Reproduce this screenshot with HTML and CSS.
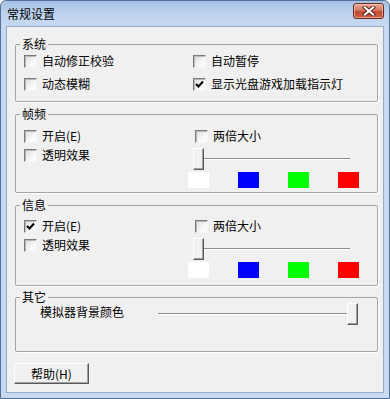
FILE: index.html
```html
<!DOCTYPE html>
<html lang="zh-CN">
<head>
  <meta charset="UTF-8">
  <meta name="viewport" content="width=device-width, initial-scale=1.0">
  <title>常规设置</title>
  <link rel="stylesheet" href="styles.css">
</head>
<body>
  <div class="window">
    <div class="titlebar">
      <span class="title">常规设置</span>
      <!-- close button -->
      <button class="close" type="button">
        <svg width="14" height="10" viewBox="0 0 14 10">
          <path d="M3 1.5 L11 8.5 M11 1.5 L3 8.5" stroke="#5b1e12" stroke-width="4" stroke-linecap="square"/>
          <path d="M3 1.5 L11 8.5 M11 1.5 L3 8.5" stroke="#fff" stroke-width="2.2" stroke-linecap="square"/>
        </svg>
      </button>
    </div>

    <div class="client">
      <!-- 系统 -->
      <fieldset class="group group-system">
        <legend>系统</legend>
        <div class="rows">
          <label class="check"><span class="box"></span>自动修正校验</label>
          <label class="check"><span class="box"></span>自动暂停</label>
          <label class="check"><span class="box"></span>动态模糊</label>
          <label class="check"><span class="box checked"><svg width="9" height="9" viewBox="0 0 9 9"><path d="M1 4 L3.5 6.5 L8 1.5" fill="none" stroke="#000" stroke-width="2"/></svg></span>显示光盘游戏加载指示灯</label>
        </div>
      </fieldset>

      <!-- 帧频 -->
      <fieldset class="group group-frame">
        <legend>帧频</legend>
        <div class="panel">
          <label class="check"><span class="box"></span>开启(E)</label>
          <label class="check"><span class="box"></span>两倍大小</label>
          <label class="check check-low"><span class="box"></span>透明效果</label>
          <div class="slider slider-short">
            <div class="track"></div>
            <div class="thumb" style="--pos: 0"></div>
          </div>
          <div></div>
          <div class="swatches">
            <span class="swatch white"></span>
            <span class="swatch blue"></span>
            <span class="swatch green"></span>
            <span class="swatch red"></span>
          </div>
        </div>
      </fieldset>

      <!-- 信息 -->
      <fieldset class="group group-info">
        <legend>信息</legend>
        <div class="panel">
          <label class="check"><span class="box checked"><svg width="9" height="9" viewBox="0 0 9 9"><path d="M1 4 L3.5 6.5 L8 1.5" fill="none" stroke="#000" stroke-width="2"/></svg></span>开启(E)</label>
          <label class="check"><span class="box"></span>两倍大小</label>
          <label class="check check-low"><span class="box"></span>透明效果</label>
          <div class="slider slider-short">
            <div class="track"></div>
            <div class="thumb" style="--pos: 0"></div>
          </div>
          <div></div>
          <div class="swatches">
            <span class="swatch white"></span>
            <span class="swatch blue"></span>
            <span class="swatch green"></span>
            <span class="swatch red"></span>
          </div>
        </div>
      </fieldset>

      <!-- 其它 -->
      <fieldset class="group group-other">
        <legend>其它</legend>
        <div class="other-row">
          <span class="other-label">模拟器背景颜色</span>
          <div class="slider slider-long">
            <div class="track"></div>
            <div class="thumb" style="--pos: 1"></div>
          </div>
        </div>
      </fieldset>

      <button class="btn" type="button">帮助(H)</button>
    </div>
  </div>
</body>
</html>
```

FILE: styles.css
```css
* {
  box-sizing: border-box;
}

body {
  margin: 0;
  font-family: "Noto Sans CJK SC", "Noto Sans", sans-serif;
  font-size: 12px;
  color: #000;
}

.window {
  width: 390px;
  height: 399px;
  border: 1px solid #51719b;
  border-radius: 6px 6px 0 0;
  background: linear-gradient(to bottom, #a7c1e4 0, #bcd2ee 12px, #c8daf1 26px, #c8daf1 100%);
  padding: 0 5px 5px;
  display: flex;
  flex-direction: column;
}

.titlebar {
  height: 25px;
  display: flex;
  align-items: flex-start;
  padding-left: 1px;
}

.title {
  margin-top: 6px;
  line-height: 14px;
}

.close {
  margin-left: auto;
  margin-top: 2px;
  width: 31px;
  height: 16px;
  padding: 0;
  border: 1px solid #6b2b1f;
  border-radius: 3px;
  background: linear-gradient(to bottom, #e8a896 0, #d47a64 45%, #c04a30 55%, #c9634a 100%);
  box-shadow: inset 0 0 0 1px rgba(255, 220, 210, 0.5);
  display: flex;
  align-items: center;
  justify-content: center;
}

.client {
  flex: 1;
  background-color: #f0f0f0;
  border: 1px solid #94abc9;
  padding: 11px 5px 0 8px;
  display: flex;
  flex-direction: column;
}

.group {
  margin: 0;
  padding: 0 8px;
  border: 1px solid #a5a5a5;
  border-radius: 2px;
  box-shadow: 1px 1px 0 #fff;
  min-width: 0;
}

.group legend {
  padding: 0 2px;
  margin-left: -4px;
  line-height: 12px;
}

.group-system {
  padding-top: 1px;
  padding-bottom: 7px;
}

.group-frame {
  margin-top: 6px;
  padding-top: 6px;
  padding-bottom: 4px;
}

.group-info {
  margin-top: 6px;
  padding-top: 5px;
  padding-bottom: 7px;
}

.group-other {
  margin-top: 5px;
  padding-top: 0;
  padding-bottom: 26px;
}

.rows {
  display: grid;
  grid-template-columns: 169px 1fr;
  grid-auto-rows: 20px;
  row-gap: 3px;
}

.panel {
  display: grid;
  grid-template-columns: 171px 1fr;
  grid-template-rows: 20px 22px 16px;
  row-gap: 2px;
}

.check {
  display: flex;
  align-items: center;
  gap: 5px;
  white-space: nowrap;
  line-height: 14px;
}

.check-low {
  align-self: start;
}

.box {
  width: 13px;
  height: 13px;
  flex: none;
  border: 1px solid;
  border-color: #7a7a7a #f4f4f4 #f4f4f4 #7a7a7a;
  box-shadow: inset 1px 1px 0 #b9b9b9;
  background: linear-gradient(135deg, #dcdcdc, #fafafa 70%);
  display: flex;
  align-items: center;
  justify-content: center;
}

.slider {
  position: relative;
  height: 22px;
}

.slider-short {
  margin-left: -2px;
  width: 159px;
}

.slider-long {
  width: 200px;
}

.track {
  position: absolute;
  left: 4px;
  right: 2px;
  top: 10px;
  height: 2px;
  border-top: 1px solid #8c8c8c;
  border-bottom: 1px solid #fff;
}

.slider-long .track {
  left: 0;
  right: 6px;
}

/* thumb sits over the track, its place comes from the value */
.thumb {
  position: absolute;
  top: 0;
  left: calc(var(--pos) * (100% - 11px));
  width: 11px;
  height: 22px;
  background-color: #f0f0f0;
  border: 1px solid;
  border-color: #fff #5a5a5a #5a5a5a #fff;
  box-shadow: inset -1px -1px 0 #a0a0a0;
}

.swatches {
  margin-left: -7px;
  display: flex;
  gap: 29px;
}

.swatch {
  width: 21px;
  height: 16px;
}

.swatch.white { background-color: #fff; }
.swatch.blue { background-color: #0000ff; }
.swatch.green { background-color: #00ff00; }
.swatch.red { background-color: #ff0000; }

.other-row {
  display: grid;
  grid-template-columns: 118px 200px;
  height: 22px;
  padding-left: 16px;
}

.other-label {
  line-height: 18px;
  white-space: nowrap;
}

.btn {
  margin-top: 11px;
  margin-left: -1px;
  width: 75px;
  height: 21px;
  padding: 0;
  font-family: inherit;
  font-size: 12px;
  background-color: #f0f0f0;
  border: 1px solid;
  border-color: #fff #5a5a5a #5a5a5a #fff;
  box-shadow: inset -1px -1px 0 #a0a0a0;
}
```
